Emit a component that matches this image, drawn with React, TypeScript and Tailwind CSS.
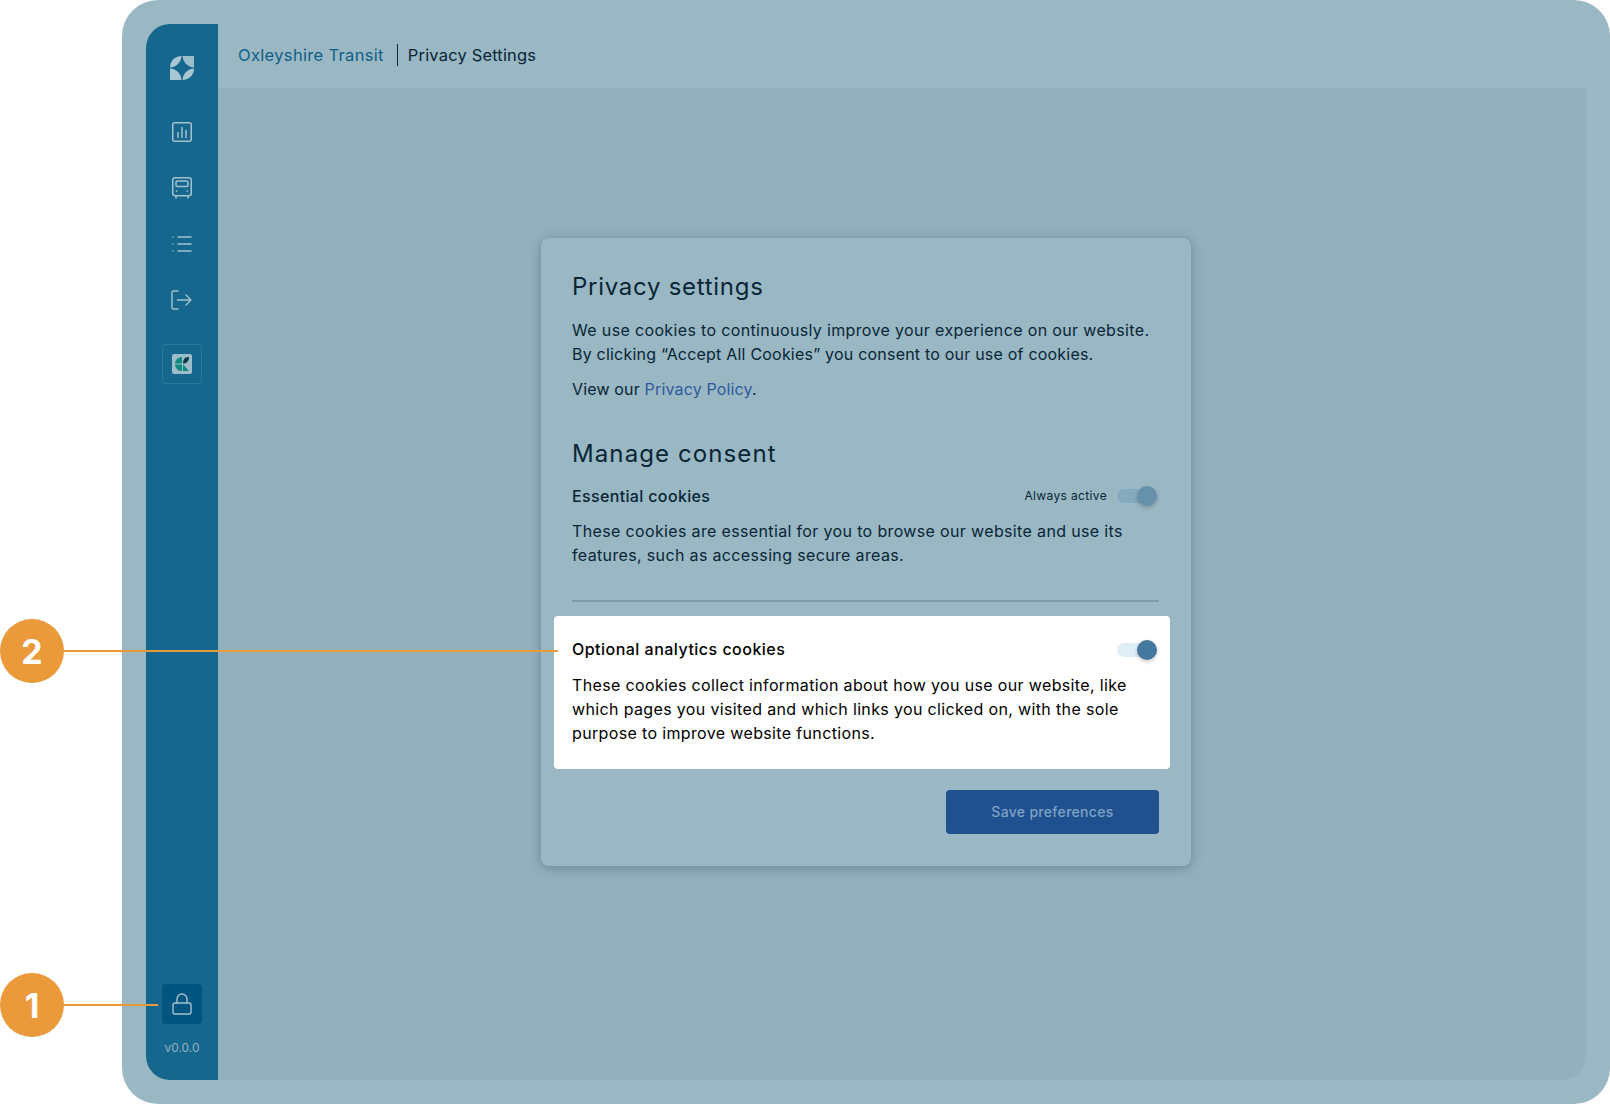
import { List, Lock } from "lucide-react";

const font = "font-['Inter','Liberation_Sans',sans-serif]";

function Logo() {
  return (
    <svg width="24" height="24" viewBox="0 0 24 24" fill="#a9c6d3">
      <path d="M11.500 0C11 6.500 6.500 11 0 11.500C0 5 5 0 11.500 0Z" />
      <path d="M12.500 0H24V11.500C17.500 11 13 6.500 12.500 0Z" opacity="0.9" />
      <path d="M0 12.500C6.500 13 11 17.500 11.500 24H0Z" />
      <path d="M24 12.500C17.500 13 13 17.500 12.500 24C19 24 24 19 24 12.500Z" />
    </svg>
  );
}

function ChartIcon() {
  return (
    <svg width="20" height="20" viewBox="0 0 20 20" fill="none" stroke="#a4c1ce" strokeWidth="1.5" strokeLinecap="round">
      <rect x="0.75" y="0.75" width="18.5" height="18.5" rx="2" />
      <path d="M6 10.500v5M10 5.500v10M14 8.500v7" />
    </svg>
  );
}

function BusIcon() {
  return (
    <svg width="20" height="22" viewBox="0 0 20 22" fill="none" stroke="#a4c1ce" strokeWidth="1.5" strokeLinecap="round">
      <rect x="0.75" y="0.75" width="18.5" height="18" rx="2.500" />
      <rect x="4" y="4" width="12" height="5.500" rx="1.500" />
      <path d="M4.500 14h.5M15 14h.5M4 19v2M16 19v2" />
    </svg>
  );
}

function LogoutIcon() {
  return (
    <svg width="22" height="20" viewBox="0 0 22 20" fill="none" stroke="#a4c1ce" strokeWidth="1.4" strokeLinecap="round" strokeLinejoin="round">
      <path d="M7 1H2.500A1.500 1.500 0 0 0 1 2.500v15A1.500 1.500 0 0 0 2.500 19H7" />
      <path d="M6.500 10H20M15 5l5 5-5 5" />
    </svg>
  );
}

function AppMark() {
  return (
    <svg width="20" height="20" viewBox="0 0 20 20">
      <rect width="20" height="20" rx="2" fill="#9dbcc8" />
      <path d="M3 9.500A7 7 0 0 1 10 3v6.500Z" fill="#10897f" />
      <path d="M3 10.500h7V17A7 7 0 0 1 3 10.500Z" fill="#10897f" />
      <path d="M11 10.500l6 6.500h-6Z" fill="#10897f" />
      <path d="M11 9.500C11 5 13 3 17 3C17 7 15 9.500 11 9.500Z" fill="#0c3d46" />
    </svg>
  );
}

function Toggle({ muted }: { muted?: boolean }) {
  return (
    <div className={`relative mr-[2px] h-[14px] w-10 rounded-full ${muted ? "bg-[#86aabd]" : "mt-[2px] bg-[#dfedf6]"}`}>
      <div
        className={`absolute -top-[3px] right-0 size-5 rounded-full shadow-[0_2px_4px_rgba(0,0,0,0.2)] ${
          muted ? "bg-[#6791ab]" : "bg-[#44789f]"
        }`}
      />
    </div>
  );
}

function Callout({ n, className, lineWidth }: { n: number; className: string; lineWidth: string }) {
  return (
    <div className={`absolute left-0 flex items-center ${className}`}>
      <div className="flex size-16 items-center justify-center rounded-full bg-[#ea9a3a] text-[34px] font-bold text-white">{n}</div>
      <div className={`h-[2px] bg-[#ea9a3a] ${lineWidth}`} />
    </div>
  );
}

export default function App() {
  return (
    <div className={`relative h-[1104px] w-[1610px] overflow-hidden bg-white pl-[122px] ${font}`}>
      <div className="h-full rounded-[36px] bg-[#9ab7c4] p-6">
        <div className="flex h-full">
          <aside className="flex w-[72px] flex-col items-center rounded-l-[24px] bg-[#16678d] pb-[24px] pt-[32px]">
            <Logo />
            <div className="mt-[24px] flex flex-col items-center">
              <div className="flex h-[56px] items-center"><ChartIcon /></div>
              <div className="flex h-[56px] items-center"><BusIcon /></div>
              <div className="flex h-[56px] items-center"><List size={24} strokeWidth={1.5} color="#a4c1ce" /></div>
              <div className="flex h-[56px] items-center"><LogoutIcon /></div>
              <div className="mt-[16px] flex size-10 items-center justify-center rounded border border-[#2f7a9c]"><AppMark /></div>
            </div>
            <div className="mt-auto flex size-10 items-center justify-center rounded bg-[#02557f]">
              <Lock size={24} strokeWidth={1.4} color="#a4c1ce" />
            </div>
            <div className="mt-[16px] text-xs text-[#8fb2c4]">v0.0.0</div>
          </aside>

          <div className="flex min-w-0 flex-1 flex-col">
            <header className="flex h-16 shrink-0 items-center pb-[2px] pl-5 text-[16.5px]">
              <span className="tracking-[0.02em] text-[#0f5f86]">Oxleyshire Transit</span>
              <span className="ml-[13px] mr-[10px] h-[22px] w-px bg-[#082635]" />
              <span className="tracking-[0.01em] text-[#082635]">Privacy Settings</span>
            </header>
            <main className="flex flex-1 items-start justify-center rounded-br-[24px] bg-[#93b0bd] pr-[72px] pt-[150px]">
              <section className="flex h-[628px] w-[650px] flex-col rounded-lg bg-[#9ab7c4] pl-[31px] pr-8 pt-[33px] tracking-[0.022em] text-[#082635] shadow-[0_2px_12px_rgba(40,70,90,0.4)]">
                <h2 className="text-2xl leading-8 tracking-[0.03em]">Privacy settings</h2>
                <p className="mt-[15px] text-base leading-6">
                  We use cookies to continuously improve your experience on our website.
                  <br />
                  <span className="tracking-[0.013em]">By clicking “Accept All Cookies” you consent to our use of cookies.</span>
                </p>
                <p className="mt-[11px] text-base leading-6 tracking-[0.01em]">
                  View our <span className="text-[#2f5b9c]">Privacy Policy</span>.
                </p>
                <h2 className="mt-[37px] text-2xl leading-8 tracking-[0.046em]">Manage consent</h2>
                <div className="mt-[14px] flex h-6 items-center justify-between">
                  <span className="text-base font-medium">Essential cookies</span>
                  <div className="flex items-center gap-[10px]">
                    <span className="text-xs">Always active</span>
                    <Toggle muted />
                  </div>
                </div>
                <p className="mt-[11px] text-base leading-6">
                  These cookies are essential for you to browse our website and use its features, such as accessing secure areas.
                </p>
                <div className="mt-[33px] h-0.5 bg-[#7f9dab]" />
                <div className="-ml-[18px] -mr-[11px] mt-[14px] h-[153px] rounded bg-white pl-[18px] pr-[11px] pt-[21px] text-black">
                  <div className="flex h-6 items-center justify-between">
                    <span className="text-base font-medium tracking-[0.03em]">Optional analytics cookies</span>
                    <Toggle />
                  </div>
                  <p className="mt-[12px] text-base leading-6">
                    These cookies collect information about how you use our website, like which pages you visited and which links you clicked on, with the sole purpose to improve website functions.
                  </p>
                </div>
                <div className="mt-[21px] flex justify-end">
                  <button className="h-11 w-[213px] rounded bg-[#1f5090] text-sm font-medium tracking-[0.022em] text-[#7fa3c4]">Save preferences</button>
                </div>
              </section>
            </main>
          </div>
        </div>
      </div>

      <Callout n={1} className="top-[973px]" lineWidth="w-[94px]" />
      <Callout n={2} className="top-[619px]" lineWidth="w-[494px]" />
    </div>
  );
}
